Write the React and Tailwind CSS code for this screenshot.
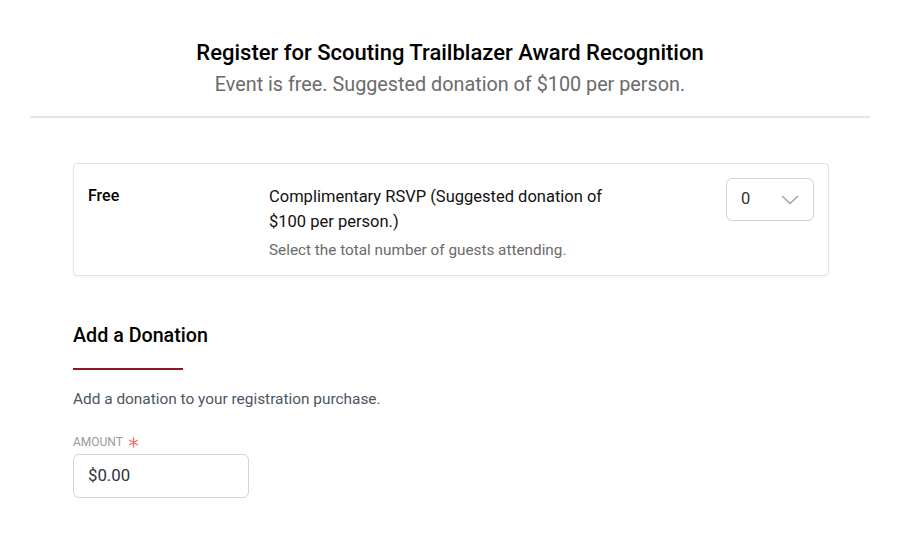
import React from "react";

export default function App() {
  return (
    <div className="min-h-screen bg-white text-[#111] font-['Roboto','Liberation_Sans',sans-serif]">
      <div className="w-[900px]">
        <div className="mx-[30px] border-b-2 border-[#e6e6e6] pt-[39px] pb-[17px] text-center">
          <h1 className="text-[22px] font-medium leading-[28px] text-black">
            Register for Scouting Trailblazer Award Recognition
          </h1>
          <p className="mt-[4px] text-[19.8px] leading-[28px] text-[#6b6b6b]">
            Event is free. Suggested donation of $100 per person.
          </p>
        </div>

        <div className="mx-[73px] mt-[45px] w-[756px]">
          <div className="flex rounded-[4px] border border-[#e3e3e3] pt-[14px] pb-[15px] pl-[14px] pr-[14px] shadow-[0_1px_2px_rgba(0,0,0,0.03)]">
            <div className="w-[181px] pt-[8px] text-[16px] font-medium leading-[20px] text-black">Free</div>
            <div className="w-[360px] pt-[6px]">
              <p className="text-[16.5px] leading-[25px] text-[#111]">
                Complimentary RSVP (Suggested donation of $100 per person.)
              </p>
              <p className="mt-[6px] text-[15.3px] leading-[20px] text-[#6b6b6b]">
                Select the total number of guests attending.
              </p>
            </div>
            <div className="ml-auto">
              <div className="flex h-[43px] w-[88px] items-center justify-between rounded-[6px] border border-[#cbd4e1] pl-[14px] pr-[14px]">
                <span className="text-[16.5px] text-[#333]">0</span>
                <svg width="18" height="10" viewBox="0 0 18 10" fill="none" stroke="#a0a4ab" strokeWidth="1.5" strokeLinecap="round" strokeLinejoin="round">
                  <path d="M1.5 1.5l7.5 7 7.5-7" />
                </svg>
              </div>
            </div>
          </div>

          <h2 className="mt-[47px] text-[19.7px] font-medium leading-[26px] text-black">Add a Donation</h2>
          <div className="mt-[19px] h-[2px] w-[110px] bg-[#8b1a22]" />
          <p className="mt-[19px] text-[15.4px] leading-[20px] text-[#4b5563]">
            Add a donation to your registration purchase.
          </p>

          <label className="mt-[25px] flex items-center text-[12px] leading-[16px] uppercase text-[#9a9a9a]">
            Amount
            <svg className="ml-[5px]" width="11" height="11" viewBox="0 0 12 12" fill="none" stroke="#ef6f6a" strokeWidth="1.4" strokeLinecap="round">
              <path d="M6 1v10M1.7 3.5l8.6 5M1.7 8.5l8.6-5" />
            </svg>
          </label>
          <div className="mt-[4px] flex h-[44px] w-[176px] items-center rounded-[6px] border border-[#cbd4e1] pl-[14px]">
            <span className="text-[16.8px] text-[#2d3440]">$0.00</span>
          </div>
        </div>
      </div>
    </div>
  );
}
